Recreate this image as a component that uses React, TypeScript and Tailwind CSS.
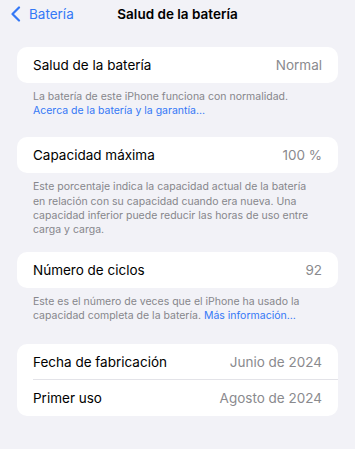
import React from "react";

const font = { fontFamily: "Inter, 'Noto Sans', sans-serif" };

function Row({ label, value, divider }: { label: string; value: string; divider?: boolean }) {
  return (
    <div className="relative flex h-[36px] items-center justify-between pl-4 pr-4">
      <span className="text-[13.5px] text-black">{label}</span>
      <span className="text-[13.5px] text-[#8a8a8e]">{value}</span>
      {divider && <div className="absolute bottom-0 left-4 right-0 h-px bg-[#e3e3e8]" />}
    </div>
  );
}

function Footer({ children }: { children: React.ReactNode }) {
  return (
    <p className="px-4 pt-[7px] text-[10.5px] leading-[14.2px] text-[#86868b]">{children}</p>
  );
}

export default function App() {
  return (
    <div className="min-h-[449px] w-full bg-[#f2f2f7] pb-8" style={font}>
      <header className="relative flex h-[28px] items-center">
        <div className="flex items-center pl-[10px] text-[#3478f6]">
          <svg width="11" height="16" viewBox="0 0 11 16" fill="none">
            <path d="M9 1.5 L2.5 8 L9 14.5" stroke="currentColor" strokeWidth="2.2" strokeLinecap="round" strokeLinejoin="round" />
          </svg>
          <span className="ml-[8px] text-[13.5px]">Batería</span>
        </div>
        <h1 className="absolute left-1/2 -translate-x-1/2 text-[13.5px] font-semibold text-black">Salud de la batería</h1>
      </header>

      <main className="px-[17px] pt-[19px]">
        <section className="overflow-hidden rounded-[10px] bg-white">
          <Row label="Salud de la batería" value="Normal" />
        </section>
        <Footer>
          La batería de este iPhone funciona con normalidad.
          <br />
          <span className="text-[#3478f6]">Acerca de la batería y la garantía…</span>
        </Footer>

        <section className="mt-[19px] overflow-hidden rounded-[10px] bg-white">
          <Row label="Capacidad máxima" value="100 %" />
        </section>
        <Footer>
          Este porcentaje indica la capacidad actual de la batería
          <br />
          en relación con su capacidad cuando era nueva. Una
          <br />
          capacidad inferior puede reducir las horas de uso entre
          <br />
          carga y carga.
        </Footer>

        <section className="mt-[15px] overflow-hidden rounded-[10px] bg-white">
          <Row label="Número de ciclos" value="92" />
        </section>
        <Footer>
          Este es el número de veces que el iPhone ha usado la
          <br />
          capacidad completa de la batería. <span className="text-[#3478f6]">Más información…</span>
        </Footer>

        <section className="mt-[20px] overflow-hidden rounded-[10px] bg-white">
          <Row label="Fecha de fabricación" value="Junio de 2024" divider />
          <Row label="Primer uso" value="Agosto de 2024" />
        </section>
      </main>
    </div>
  );
}
